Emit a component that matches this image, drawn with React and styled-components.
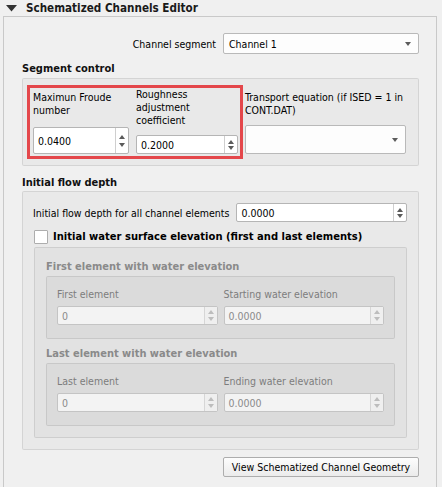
import React from 'react';
import styled, { createGlobalStyle } from 'styled-components';

const Global = createGlobalStyle`
  html, body {
    margin: 0;
    padding: 0;
    background: #f0f0f0;
  }
  body {
    font-family: "DejaVu Sans Condensed", "Liberation Sans", sans-serif;
    font-size: 10.5px;
    color: #000;
  }
  * { box-sizing: border-box; }
`

const Window = styled.div`
  width: 442px;
  height: 487px;
  overflow: hidden;
  background: #f0f0f0;
`

const Header = styled.div`
  height: 16px;
  display: flex;
  align-items: center;
  padding-left: 6px;
  gap: 9px;
`

const Title = styled.span`
  font-weight: bold;
  font-size: 11.6px;
  line-height: 14px;
  color: #1a1a1a;
`

const Panel = styled.div`
  margin-left: 3px;
  width: 434px;
  height: 471px;
  border: 1px solid #c9c9c9;
  border-bottom: none;
  padding: 0 17px 0 18px;
  display: flex;
  flex-direction: column;
`

const ChannelRow = styled.div`
  margin-top: 16px;
  display: flex;
  justify-content: flex-end;
  align-items: center;
  gap: 7px;
`

const Label = styled.div`
  line-height: ${p => p.$lh || 14}px;
  padding-top: ${p => p.$top || 0}px;
  color: ${p => (p.$disabled ? '#7d7d7d' : '#000')};
  white-space: ${p => (p.$wrap ? 'normal' : 'nowrap')};
`

const Combo = styled.div`
  width: ${p => (p.$w ? `${p.$w}px` : 'auto')};
  height: ${p => p.$h}px;
  background: #fdfdfd;
  border: 1px solid #b9b9b9;
  border-radius: 2px;
  display: flex;
  align-items: center;
  justify-content: space-between;
  padding: 0 7px 0 5px;
`

const DownArrow = styled.span`
  width: 0;
  height: 0;
  border-left: 3.5px solid transparent;
  border-right: 3.5px solid transparent;
  border-top: 4px solid #5c5c5c;
`

const SectionTitle = styled.div`
  font-weight: bold;
  font-size: 11px;
  line-height: 14px;
  margin-top: ${p => p.$mt}px;
  margin-bottom: ${p => p.$mb}px;
  color: ${p => (p.$disabled ? '#8a8a8a' : '#111')};
`

const GroupBox = styled.div`
  border: 1px solid rgba(0, 0, 0, 0.09);
  border-radius: 2px;
  background: rgba(0, 0, 0, 0.028);
`

const SegmentBox = styled(GroupBox)`
  height: 88px;
  padding: 6px 11px 6px 4px;
  display: flex;
  gap: 2px;
`

const RedFrame = styled.div`
  width: 216px;
  border: 3px solid #e4474b;
  padding: 0 2px 2px 3px;
  display: flex;
  gap: 7px;
`

const Column = styled.div`
  width: ${p => p.$w}px;
  display: flex;
  flex-direction: column;
  justify-content: space-between;
  padding: ${p => p.$pad || '0'};
`

const SpinBox = styled.div`
  flex: ${p => (p.$grow ? 1 : 'none')};
  height: ${p => p.$h}px;
  background: ${p => (p.$disabled ? '#f3f3f3' : '#fff')};
  border: 1px solid ${p => (p.$disabled ? '#c4c4c4' : '#b5b5b5')};
  border-radius: 2px;
  display: flex;
  align-items: stretch;
  color: ${p => (p.$disabled ? '#8a8a8a' : '#000')};
`

const SpinValue = styled.div`
  flex: 1;
  display: flex;
  align-items: center;
  padding-left: 4px;
`

const SpinButtons = styled.div`
  width: 13px;
  border-left: 1px solid ${p => (p.$disabled ? '#d6d6d6' : '#cfcfcf')};
  display: flex;
  flex-direction: column;
  align-items: center;
  justify-content: center;
  gap: ${p => p.$gap}px;
  background: ${p => (p.$disabled ? '#efefef' : 'transparent')};
`

const Tri = styled.span`
  width: 0;
  height: 0;
  border-left: 3.5px solid transparent;
  border-right: 3.5px solid transparent;
  ${p => (p.$up ? 'border-bottom' : 'border-top')}: 4px solid ${p => (p.$disabled ? '#bdbdbd' : '#5a5a5a')};
`

const FlowBox = styled(GroupBox)`
  height: 259px;
  padding: 11px 11px 11px 10px;
  display: flex;
  flex-direction: column;
`

const Row = styled.div`
  display: flex;
  align-items: center;
  gap: 7px;
`

const CheckRow = styled.div`
  margin-top: 7px;
  margin-left: 1px;
  height: 15px;
  display: flex;
  align-items: center;
  gap: 5px;
`

const CheckBox = styled.span`
  width: 14px;
  height: 14px;
  background: #fff;
  border: 1px solid #adadad;
  border-radius: 1px;
`

const CheckLabel = styled.span`
  font-weight: bold;
  font-size: 11.1px;
`

const DisabledBox = styled(GroupBox)`
  margin-top: 3px;
  margin-left: 1px;
  height: 191px;
  padding: 12px 11px 11px 11px;
`

const InnerBox = styled(GroupBox)`
  height: 63px;
  padding: 10px 10px 0 10px;
  display: grid;
  grid-template-columns: 1fr 1fr;
  column-gap: 6px;
  align-content: start;
`

const Field = styled.div`
  display: flex;
  flex-direction: column;
  gap: 5px;
`

const Footer = styled.div`
  margin-top: 7px;
  display: flex;
  justify-content: flex-end;
`

const Button = styled.div`
  width: 196px;
  height: 20px;
  border: 1px solid #adadad;
  border-radius: 2px;
  background: linear-gradient(#fdfdfd, #ebebeb);
  display: flex;
  align-items: center;
  justify-content: center;
`

function Spin({ value, h, grow, disabled, gap }) {
  return (
    <SpinBox $h={h} $grow={grow} $disabled={disabled}>
      <SpinValue>{value}</SpinValue>
      <SpinButtons $disabled={disabled} $gap={gap || 3}>
        <Tri $up $disabled={disabled} />
        <Tri $disabled={disabled} />
      </SpinButtons>
    </SpinBox>
  );
}

function ElevationGroup({ title, first, second, mt }) {
  return (
    <>
      <SectionTitle $mt={mt} $mb={2} $disabled>{title}</SectionTitle>
      <InnerBox>
        <Field>
          <Label $disabled>{first}</Label>
          <Spin value="0" h={19} disabled />
        </Field>
        <Field>
          <Label $disabled>{second}</Label>
          <Spin value="0.0000" h={19} disabled />
        </Field>
      </InnerBox>
    </>
  );
}

export default function App() {
  return (
    <Window>
      <Global />
      <Header>
        <svg width="11" height="7" viewBox="0 0 11 7">
          <path d="M0 0 L11 0 L5.5 6.5 Z" fill="#333" />
        </svg>
        <Title>Schematized Channels Editor</Title>
      </Header>

      <Panel>
        <ChannelRow>
          <Label>Channel segment</Label>
          <Combo $w={196} $h={21}>
            <span>Channel 1</span>
            <DownArrow />
          </Combo>
        </ChannelRow>

        <SectionTitle $mt={8} $mb={2}>Segment control</SectionTitle>
        <SegmentBox>
          <RedFrame>
            <Column $w={96}>
              <Label $wrap $lh={13} $top={3}>Maximun Froude number</Label>
              <Spin value="0.0400" h={27} gap={4} />
            </Column>
            <Column $w={102}>
              <Label $wrap $lh={13}>Roughness adjustment coefficient</Label>
              <Spin value="0.2000" h={19} gap={2} />
            </Column>
          </RedFrame>
          <Column $w={161} $pad="6px 0 5px 0">
            <Label $wrap $lh={13}>Transport equation (if ISED = 1 in CONT.DAT)</Label>
            <Combo $h={29}>
              <span />
              <DownArrow />
            </Combo>
          </Column>
        </SegmentBox>

        <SectionTitle $mt={10} $mb={1}>Initial flow depth</SectionTitle>
        <FlowBox>
          <Row>
            <Label>Initial flow depth for all channel elements</Label>
            <Spin value="0.0000" h={19} grow gap={2} />
          </Row>
          <CheckRow>
            <CheckBox />
            <CheckLabel>Initial water surface elevation (first and last elements)</CheckLabel>
          </CheckRow>
          <DisabledBox>
            <ElevationGroup
              title="First element with water elevation"
              first="First element"
              second="Starting water elevation"
              mt={0}
            />
            <ElevationGroup
              title="Last element with water elevation"
              first="Last element"
              second="Ending water elevation"
              mt={8}
            />
          </DisabledBox>
        </FlowBox>

        <Footer>
          <Button>View Schematized Channel Geometry</Button>
        </Footer>
      </Panel>
    </Window>
  );
}
